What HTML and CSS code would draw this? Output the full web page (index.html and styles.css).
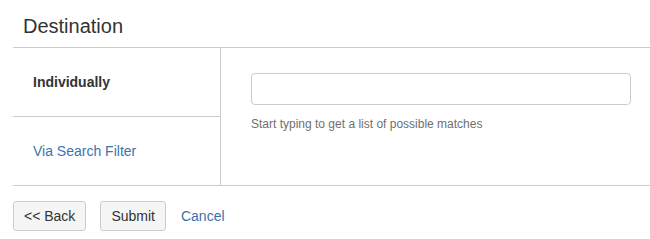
FILE: index.html
```html
<!DOCTYPE html>
<html lang="en">
<head>
    <meta charset="UTF-8">
    <title>Destination</title>
    <link rel="stylesheet" href="styles.css">
</head>
<body>
    <h2 class="title">Destination</h2>

    <div class="panel">
        <ul class="tabs">
            <li class="tab active">Individually</li>
            <li class="tab"><a href="#">Via Search Filter</a></li>
        </ul>
        <div class="pane">
            <input class="field" type="text">
            <div class="help">Start typing to get a list of possible matches</div>
        </div>
    </div>

    <div class="actions">
        <button class="btn">&lt;&lt; Back</button>
        <button class="btn">Submit</button>
        <a class="cancel" href="#">Cancel</a>
    </div>
</body>
</html>
```

FILE: styles.css
```css
body {
    margin: 0;
    padding-left: 13px;
    font-family: "Liberation Sans", Arial, sans-serif;
    font-size: 14px;
    line-height: 20px;
    color: #333;
    background: #fff;
}
a {
    color: #3b73af;
    text-decoration: none;
}
.title {
    margin: 0;
    padding: 15px 0 10px 10px;
    font-size: 20px;
    line-height: 22px;
    font-weight: normal;
    color: #333;
}
.panel {
    display: flex;
    border-top: 1px solid #ccc;
    border-bottom: 1px solid #ccc;
}
.tabs {
    list-style: none;
    margin: 0;
    padding: 0;
    width: 207px;
    border-right: 1px solid #ccc;
}
.tab {
    height: 68px;
    display: flex;
    align-items: center;
    padding-left: 20px;
}
.tab.active {
    font-weight: bold;
    border-bottom: 1px solid #ccc;
}
.pane {
    flex: 1;
    padding: 25px 19px 0 30px;
}
.field {
    display: block;
    box-sizing: border-box;
    width: 380px;
    height: 32px;
    margin: 0;
    border: 1px solid #ccc;
    border-radius: 4px;
    background: #fff;
}
.help {
    margin-top: 11px;
    font-size: 12px;
    line-height: 17px;
    color: #707070;
}
.actions {
    display: flex;
    align-items: center;
    margin-top: 15px;
}
.btn {
    font-family: inherit;
    font-size: 14px;
    line-height: 20px;
    color: #333;
    padding: 4px 10px;
    margin: 0 14px 0 0;
    background: #f5f5f5;
    border: 1px solid #ccc;
    border-radius: 3px;
}
.cancel {
    margin-left: 1px;
}
```
